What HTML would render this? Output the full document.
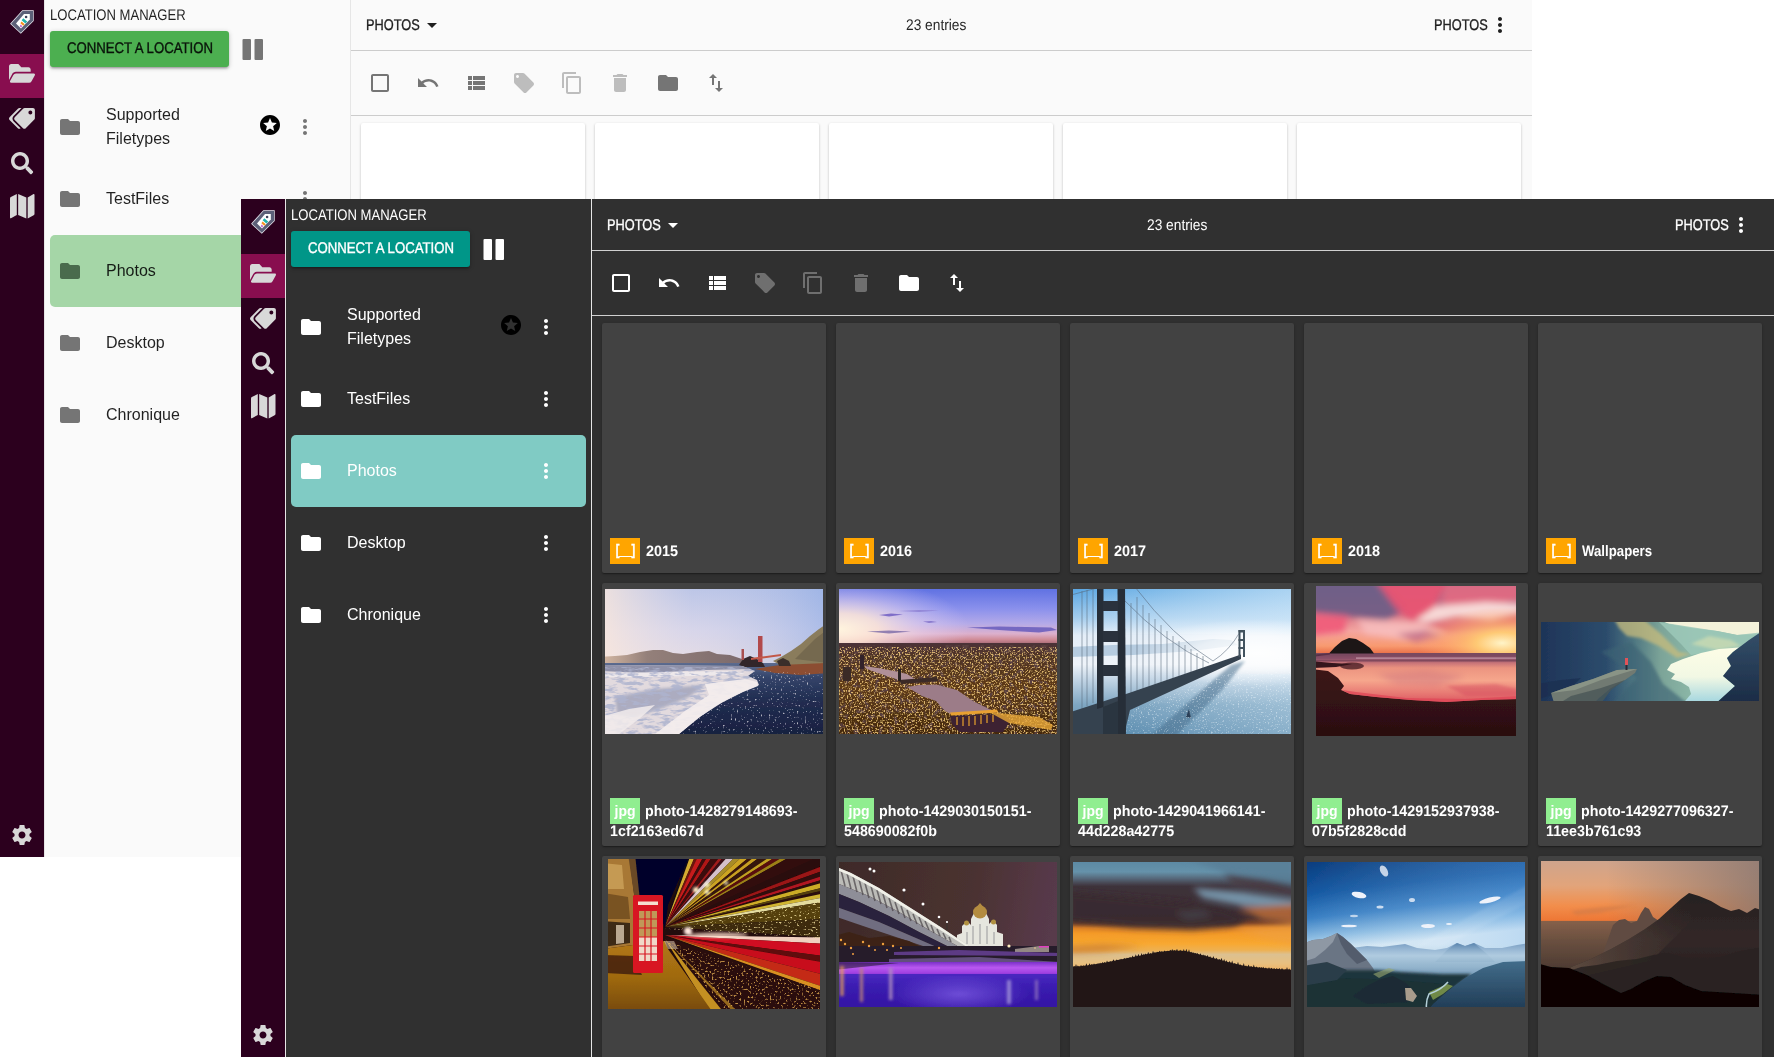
<!DOCTYPE html>
<html><head><meta charset="utf-8"><title>Location Manager</title>
<style>
html,body{margin:0;padding:0}
body{width:1774px;height:1057px;overflow:hidden;position:relative;background:#fff;font-family:"Liberation Sans",sans-serif}
.wrap{position:absolute;overflow:hidden}
.app{position:absolute;left:0;width:1533px;height:858px;overflow:hidden}
.lname,.jb,.fb{will-change:transform}
.fn,.pn{text-rendering:geometricPrecision;transform:scaleY(1.08);transform-origin:0 0}
.fn{transform:scale(1.03,1.08)}
.pn{transform:scale(1.02,1.08)}
.fn.w{transform:scale(.945,1.08)}
.ic{position:absolute;display:block;overflow:visible}
.side{position:absolute;left:0;top:0;width:44px;height:858px;background:#2c001e}
.act{position:absolute;left:0;top:55px;width:44px;height:44px;background:#880e4f}
.vl{position:absolute;top:0;width:1px;height:858px}
.panel{position:absolute;left:0;top:0;width:350px;height:858px}
.ptitle{position:absolute;left:50px;top:6px;font-size:14px;line-height:20px;white-space:nowrap}
.ptitle span,.btn span,.hl span,.hr span,.hc span{text-rendering:geometricPrecision}
.ptitle span{display:inline-block;transform:scale(.9346,1.1);transform-origin:0 78%}
.btn{position:absolute;left:50px;top:32px;width:179px;height:36px;border-radius:3px;box-shadow:0 1px 5px rgba(0,0,0,.2),0 2px 2px rgba(0,0,0,.14),0 3px 1px -2px rgba(0,0,0,.12);font-size:14px;line-height:35.4px;white-space:nowrap}
.btn span{position:absolute;left:50%;top:0;display:block;width:180px;margin-left:-90px;text-align:center;-webkit-text-stroke:.35px currentColor;transform:scale(.9413,1.1);transform-origin:50% 63.500%}
.sel{position:absolute;left:50px;width:295px;height:72px;border-radius:5px}
.lname{position:absolute;left:106px;font-size:16px;line-height:24px;white-space:nowrap}
.main{position:absolute;left:351px;top:0;width:1182px;height:858px}
.hdr{position:absolute;left:0;top:0;width:1182px;height:51px;border-bottom:1px solid}
.hl,.hr,.hc{position:absolute;top:15.7px;font-size:14px;line-height:20px;white-space:nowrap}
.hl,.hr{-webkit-text-stroke:.3px currentColor}
.hl span,.hr span{display:inline-block;transform:scale(.9134,1.1);transform-origin:0 78%}
.hc span{display:inline-block;transform:scale(.9821,1.1);transform-origin:0 78%}
.hl{left:15px}
.hr{left:1083px}
.hc{left:554.8px}
.tb{position:absolute;left:0;top:52px;width:1182px;height:64px;border-bottom:1px solid}
.card{position:absolute;width:224px;border-radius:2px;overflow:hidden}
.fb,.jb{position:absolute;left:8px;width:30px;height:26px;text-align:center;color:#fff;font-weight:bold;font-size:14px;line-height:26px}
.fb{background:#ffa500}
.fb span{display:inline-block;transform:translateY(-1.2px) scale(.78,1.08);-webkit-text-stroke:.4px #fff}
.jb{background:#90ee90;top:215px}
.fn{position:absolute;left:43.6px;font-weight:bold;font-size:14px;line-height:24px;white-space:nowrap}
.pn{position:absolute;left:8px;font-weight:bold;font-size:14px;line-height:18px;white-space:nowrap}
.ph{position:absolute;display:block}

.light{background:#fafafa;color:rgba(0,0,0,.87)}
.light .vl,.light .hdr,.light .tb{border-color:#cccccc}
.light .vl{background:#e6e6e6}
.light .btn{background:#4caf50;color:rgba(0,0,0,.87)}
.light .sel{background:#a5d6a7}
.light .card{background:#ffffff;box-shadow:0 1px 3px rgba(0,0,0,.2),0 1px 1px rgba(0,0,0,.14),0 2px 1px -1px rgba(0,0,0,.12)}

.dark{background:#303030;color:#ffffff}
.dark .vl,.dark .hdr,.dark .tb{border-color:#d0d0d0}
.dark .vl{background:#e6e6e6}
.dark .btn{background:#009688;color:#ffffff}
.dark .sel{background:#80cbc4}
.dark .card{background:#424242;box-shadow:0 1px 3px rgba(0,0,0,.2),0 1px 1px rgba(0,0,0,.14),0 2px 1px -1px rgba(0,0,0,.12)}
</style></head>
<body>
<div class="wrap" style="left:0;top:0;width:1532px;height:857px"><div style="position:absolute;left:0;top:-1px">
<div class="app light">
<div class="side">
<div class="act"></div>
<svg class="ic" style="left:10px;top:10.5px;width:24px;height:24px" viewBox="0 0 24 24">
<polygon points="12.3,0.2 23.7,0.2 23.7,11 10.8,23.8 0.1,13.8" fill="#e8e8f0"/>
<polygon points="12.6,0.9 23,0.9 23,10.7 10.8,22.8 1.1,13.8" fill="#5c6078"/>
<polygon points="14,4 19.8,4 19.8,9.6 11,18.4 6,13.6" fill="#ffffff"/>
<circle cx="16.1" cy="7" r="1.3" fill="#3c4058"/>
<polygon points="13.3,8.3 17.2,11.6 15.4,13.4 11.6,10.2" fill="#1fb5ad"/>
<polygon points="11.5,11.4 14.8,14.2 13.2,15.8 10.4,13.2" fill="#f7901e"/>
<polygon points="10.6,14.6 12.2,16 11.2,17.4 9.8,16.2" fill="#c25fd0"/>
</svg>
<svg class="ic" style="left:8.9px;top:65.4px;width:26.00px;height:18.80px" viewBox="0 64 576 384" preserveAspectRatio="none"><path fill="#d8d8d8" d="M572.694 292.093L500.27 416.248A63.997 63.997 0 0 1 444.989 448H45.025c-18.523 0-30.064-20.093-20.731-36.093l72.424-124.155A64 64 0 0 1 152 256h399.964c18.523 0 30.064 20.093 20.730 36.093zM152 224h328v-48c0-26.510-21.490-48-48-48H272l-64-64H48C21.490 64 0 85.490 0 112v278.046l69.077-118.418C86.214 242.250 117.989 224 152 224z"/></svg>
<svg class="ic" style="left:9.4px;top:108.6px;width:25.90px;height:20.80px" viewBox="0 0 640 512" preserveAspectRatio="none"><path fill="#d8d8d8" transform="translate(640,0) scale(-1,1)" d="M497.941 225.941L286.059 14.059A48 48 0 0 0 252.118 0H48C21.490 0 0 21.490 0 48v204.118a48 48 0 0 0 14.059 33.941l211.882 211.882c18.744 18.745 49.136 18.746 67.882 0l204.118-204.118c18.745-18.745 18.745-49.137 0-67.882zM112 160c-26.510 0-48-21.490-48-48s21.490-48 48-48 48 21.490 48 48-21.490 48-48 48zm513.941 133.823L421.823 497.941c-18.745 18.745-49.137 18.745-67.882 0l-.360-.360L527.640 323.522c16.999-16.999 26.360-39.600 26.360-63.640s-9.362-46.641-26.360-63.640L331.397 0h48.721a48 48 0 0 1 33.941 14.059l211.882 211.882c18.745 18.745 18.745 49.137 0 67.882z"/></svg>
<svg class="ic" style="left:11px;top:153.2px;width:22.20px;height:22.20px" viewBox="0 0 512 512" preserveAspectRatio="none"><path fill="#d8d8d8" d="M505 442.700L405.300 343c-4.500-4.500-10.600-7-17-7H372c27.600-35.300 44-79.700 44-128C416 93.100 322.900 0 208 0S0 93.100 0 208s93.100 208 208 208c48.300 0 92.700-16.400 128-44v16.300c0 6.400 2.500 12.500 7 17l99.700 99.700c9.400 9.400 24.600 9.400 33.900 0l28.300-28.300c9.400-9.400 9.400-24.600.1-34zM208 336c-70.700 0-128-57.200-128-128 0-70.700 57.200-128 128-128 70.700 0 128 57.200 128 128 0 70.700-57.200 128-128 128z"/></svg>
<svg class="ic" style="left:9.9px;top:195.2px;width:24.50px;height:24.40px" viewBox="0 32 576 448" preserveAspectRatio="none"><path fill="#d8d8d8" d="M0 117.660V463.980c0 11.320 11.430 19.060 21.940 14.860L160 416V32L20.120 87.950A32.006 32.006 0 0 0 0 117.660zM192 416l192 64V96L192 32v384zM554.060 33.160L416 96v384l139.880-55.950A31.996 31.996 0 0 0 576 394.340V48.020c0-11.320-11.430-19.060-21.940-14.860z"/></svg>
<svg class="ic" style="left:10px;top:824px;width:24px;height:24px" viewBox="0 0 24 24"><path fill="#d8d8d8"  d="M19.43 12.980c.040-.320.070-.640.070-.980s-.030-.660-.070-.980l2.110-1.650c.190-.150.240-.420.120-.640l-2-3.460c-.120-.220-.390-.300-.610-.220l-2.490 1c-.520-.400-1.080-.730-1.690-.980l-.380-2.650C14.460 2.180 14.250 2 14 2h-4c-.250 0-.460.180-.490.420l-.380 2.650c-.610.250-1.170.590-1.690.980l-2.490-1c-.230-.090-.490 0-.610.220l-2 3.460c-.130.220-.070.490.120.640l2.110 1.650c-.040.320-.070.650-.070.980s.030.660.070.980l-2.110 1.650c-.190.150-.240.420-.120.640l2 3.460c.120.220.390.300.610.220l2.490-1c.520.400 1.080.730 1.690.980l.380 2.650c.030.240.240.420.490.420h4c.250 0 .460-.180.490-.420l.380-2.650c.610-.250 1.170-.590 1.690-.980l2.490 1c.230.090.490 0 .610-.220l2-3.460c.120-.220.070-.490-.120-.640l-2.110-1.650zM12 15.500c-1.930 0-3.500-1.570-3.500-3.500s1.570-3.500 3.500-3.500 3.500 1.570 3.500 3.500-1.570 3.500-3.500 3.500z"/></svg>
</div>
<div class="vl" style="left:44px"></div>
<div class="panel">
<div class="ptitle"><span>LOCATION MANAGER</span></div>
<div class="btn"><span>CONNECT A LOCATION</span></div>
<svg class="ic" style="left:242px;top:40px;width:21px;height:21px" viewBox="0 0 21 21"><rect x=".5" y="0" width="8.5" height="21" rx="1.1" fill="#757575"/><rect x="12.500" y="0" width="8.500" height="21" rx="1.100" fill="#757575"/></svg>
<svg class="ic" style="left:58px;top:116px;width:24px;height:24px" viewBox="0 0 24 24"><path fill="#757575"  d="M10 4H4c-1.1 0-1.99.9-1.99 2L2 18c0 1.1.9 2 2 2h16c1.1 0 2-.9 2-2V8c0-1.1-.9-2-2-2h-8l-2-2z"/></svg>
<div class="lname" style="top:104px">Supported<br>Filetypes</div>
<svg class="ic" style="left:258px;top:114px;width:24px;height:24px" viewBox="0 0 24 24"><circle cx="12" cy="12" r="9" fill="#fafafa"/><path fill="#000" d="M11.99 2C6.47 2 2 6.48 2 12s4.470 10 9.990 10C17.520 22 22 17.520 22 12S17.520 2 11.990 2zm4.240 16L12 15.450 7.770 18l1.120-4.810-3.730-3.230 4.920-.420L12 5l1.920 4.530 4.920.420-3.730 3.230L16.230 18z"/></svg>
<svg class="ic" style="left:293px;top:116px;width:24px;height:24px" viewBox="0 0 24 24"><path fill="#757575"  d="M12 8c1.1 0 2-.9 2-2s-.9-2-2-2-2 .9-2 2 .9 2 2 2zm0 2c-1.1 0-2 .9-2 2s.9 2 2 2 2-.9 2-2-.9-2-2-2zm0 6c-1.1 0-2 .9-2 2s.9 2 2 2 2-.9 2-2-.9-2-2-2z"/></svg>
<svg class="ic" style="left:58px;top:188px;width:24px;height:24px" viewBox="0 0 24 24"><path fill="#757575"  d="M10 4H4c-1.1 0-1.99.9-1.99 2L2 18c0 1.1.9 2 2 2h16c1.1 0 2-.9 2-2V8c0-1.1-.9-2-2-2h-8l-2-2z"/></svg>
<div class="lname" style="top:188px">TestFiles</div>
<svg class="ic" style="left:293px;top:188px;width:24px;height:24px" viewBox="0 0 24 24"><path fill="#757575"  d="M12 8c1.1 0 2-.9 2-2s-.9-2-2-2-2 .9-2 2 .9 2 2 2zm0 2c-1.1 0-2 .9-2 2s.9 2 2 2 2-.9 2-2-.9-2-2-2zm0 6c-1.1 0-2 .9-2 2s.9 2 2 2 2-.9 2-2-.9-2-2-2z"/></svg>
<div class="sel" style="top:236px"></div>
<svg class="ic" style="left:58px;top:260px;width:24px;height:24px" viewBox="0 0 24 24"><path fill="#4a6b4d"  d="M10 4H4c-1.1 0-1.99.9-1.99 2L2 18c0 1.1.9 2 2 2h16c1.1 0 2-.9 2-2V8c0-1.1-.9-2-2-2h-8l-2-2z"/></svg>
<div class="lname" style="top:260px">Photos</div>
<svg class="ic" style="left:58px;top:332px;width:24px;height:24px" viewBox="0 0 24 24"><path fill="#757575"  d="M10 4H4c-1.1 0-1.99.9-1.99 2L2 18c0 1.1.9 2 2 2h16c1.1 0 2-.9 2-2V8c0-1.1-.9-2-2-2h-8l-2-2z"/></svg>
<div class="lname" style="top:332px">Desktop</div>
<svg class="ic" style="left:293px;top:332px;width:24px;height:24px" viewBox="0 0 24 24"><path fill="#757575"  d="M12 8c1.1 0 2-.9 2-2s-.9-2-2-2-2 .9-2 2 .9 2 2 2zm0 2c-1.1 0-2 .9-2 2s.9 2 2 2 2-.9 2-2-.9-2-2-2zm0 6c-1.1 0-2 .9-2 2s.9 2 2 2 2-.9 2-2-.9-2-2-2z"/></svg>
<svg class="ic" style="left:58px;top:404px;width:24px;height:24px" viewBox="0 0 24 24"><path fill="#757575"  d="M10 4H4c-1.1 0-1.99.9-1.99 2L2 18c0 1.1.9 2 2 2h16c1.1 0 2-.9 2-2V8c0-1.1-.9-2-2-2h-8l-2-2z"/></svg>
<div class="lname" style="top:404px">Chronique</div>
<svg class="ic" style="left:293px;top:404px;width:24px;height:24px" viewBox="0 0 24 24"><path fill="#757575"  d="M12 8c1.1 0 2-.9 2-2s-.9-2-2-2-2 .9-2 2 .9 2 2 2zm0 2c-1.1 0-2 .9-2 2s.9 2 2 2 2-.9 2-2-.9-2-2-2zm0 6c-1.1 0-2 .9-2 2s.9 2 2 2 2-.9 2-2-.9-2-2-2z"/></svg>
</div>
<div class="vl" style="left:350px"></div>
<div class="main">
<div class="hdr">
<div class="hl"><span>PHOTOS</span></div>
<svg class="ic" style="left:69px;top:14px;width:24px;height:24px" viewBox="0 0 24 24"><path fill="#1f1f1f"  d="M7 10l5 5 5-5z"/></svg>
<div class="hc"><span>23 entries</span></div>
<div class="hr"><span>PHOTOS</span></div>
<svg class="ic" style="left:1137px;top:14px;width:24px;height:24px" viewBox="0 0 24 24"><path fill="#1f1f1f"  d="M12 8c1.1 0 2-.9 2-2s-.9-2-2-2-2 .9-2 2 .9 2 2 2zm0 2c-1.1 0-2 .9-2 2s.9 2 2 2 2-.9 2-2-.9-2-2-2zm0 6c-1.1 0-2 .9-2 2s.9 2 2 2 2-.9 2-2-.9-2-2-2z"/></svg>
</div>
<div class="tb">
<svg class="ic" style="left:17px;top:20px;width:24px;height:24px" viewBox="0 0 24 24"><path fill="#757575"  d="M19 5v14H5V5h14m0-2H5c-1.1 0-2 .9-2 2v14c0 1.1.9 2 2 2h14c1.1 0 2-.9 2-2V5c0-1.1-.9-2-2-2z"/></svg>
<svg class="ic" style="left:65px;top:20px;width:24px;height:24px" viewBox="0 0 24 24"><path fill="#757575"  d="M12.5 8c-2.650 0-5.050.990-6.900 2.600L2 7v9h9l-3.620-3.620c1.390-1.160 3.160-1.880 5.120-1.880 3.540 0 6.550 2.310 7.600 5.500l2.370-.780C21.080 11.030 17.150 8 12.500 8z"/></svg>
<svg class="ic" style="left:113px;top:20px;width:24px;height:24px" viewBox="0 0 24 24"><path fill="#757575"  d="M4 14h4v-4H4v4zm0 5h4v-4H4v4zM4 9h4V5H4v4zm5 5h12v-4H9v4zm0 5h12v-4H9v4zM9 5v4h12V5H9z"/></svg>
<svg class="ic" style="left:161px;top:20px;width:24px;height:24px" viewBox="0 0 24 24"><path fill="#bdbdbd"  d="M21.41 11.58l-9-9C12.050 2.220 11.550 2 11 2H4c-1.100 0-2 .900-2 2v7c0 .550.220 1.050.590 1.420l9 9c.360.360.860.580 1.410.580.550 0 1.050-.220 1.410-.590l7-7c.370-.360.590-.860.590-1.410 0-.550-.230-1.060-.590-1.420zM5.500 7C4.670 7 4 6.330 4 5.500S4.670 4 5.500 4 7 4.670 7 5.500 6.330 7 5.500 7z"/></svg>
<svg class="ic" style="left:209px;top:20px;width:24px;height:24px" viewBox="0 0 24 24"><path fill="#bdbdbd"  d="M16 1H4c-1.100 0-2 .900-2 2v14h2V3h12V1zm3 4H8c-1.100 0-2 .900-2 2v14c0 1.100.900 2 2 2h11c1.100 0 2-.900 2-2V7c0-1.100-.900-2-2-2zm0 16H8V7h11v14z"/></svg>
<svg class="ic" style="left:257px;top:20px;width:24px;height:24px" viewBox="0 0 24 24"><path fill="#bdbdbd"  d="M6 19c0 1.100.900 2 2 2h8c1.100 0 2-.900 2-2V7H6v12zM19 4h-3.500l-1-1h-5l-1 1H5v2h14V4z"/></svg>
<svg class="ic" style="left:305px;top:20px;width:24px;height:24px" viewBox="0 0 24 24"><path fill="#757575"  d="M10 4H4c-1.1 0-1.99.9-1.99 2L2 18c0 1.1.9 2 2 2h16c1.1 0 2-.9 2-2V8c0-1.1-.9-2-2-2h-8l-2-2z"/></svg>
<svg class="ic" style="left:353px;top:20px;width:24px;height:24px" viewBox="0 0 24 24"><path fill="#757575"  d="M16 17.010V10h-2v7.010h-3L15 21l4-3.990h-3zM9 3L5 6.990h3V14h2V6.990h3L9 3z"/></svg>
</div>
<div class="card" style="left:10px;top:124px;height:250px">
</div>
<div class="card" style="left:244px;top:124px;height:250px">
</div>
<div class="card" style="left:478px;top:124px;height:250px">
</div>
<div class="card" style="left:712px;top:124px;height:250px">
</div>
<div class="card" style="left:946px;top:124px;height:250px">
</div>
</div>
</div>
</div></div>
<div class="wrap" style="left:241px;top:199px;width:1533px;height:858px">
<div class="app dark">
<div class="side">
<div class="act"></div>
<svg class="ic" style="left:10px;top:10.5px;width:24px;height:24px" viewBox="0 0 24 24">
<polygon points="12.3,0.2 23.7,0.2 23.7,11 10.8,23.8 0.1,13.8" fill="#e8e8f0"/>
<polygon points="12.6,0.9 23,0.9 23,10.7 10.8,22.8 1.1,13.8" fill="#5c6078"/>
<polygon points="14,4 19.8,4 19.8,9.6 11,18.4 6,13.6" fill="#ffffff"/>
<circle cx="16.1" cy="7" r="1.3" fill="#3c4058"/>
<polygon points="13.3,8.3 17.2,11.6 15.4,13.4 11.6,10.2" fill="#1fb5ad"/>
<polygon points="11.5,11.4 14.8,14.2 13.2,15.8 10.4,13.2" fill="#f7901e"/>
<polygon points="10.6,14.6 12.2,16 11.2,17.4 9.8,16.2" fill="#c25fd0"/>
</svg>
<svg class="ic" style="left:8.9px;top:65.4px;width:26.00px;height:18.80px" viewBox="0 64 576 384" preserveAspectRatio="none"><path fill="#d8d8d8" d="M572.694 292.093L500.27 416.248A63.997 63.997 0 0 1 444.989 448H45.025c-18.523 0-30.064-20.093-20.731-36.093l72.424-124.155A64 64 0 0 1 152 256h399.964c18.523 0 30.064 20.093 20.730 36.093zM152 224h328v-48c0-26.510-21.490-48-48-48H272l-64-64H48C21.490 64 0 85.490 0 112v278.046l69.077-118.418C86.214 242.250 117.989 224 152 224z"/></svg>
<svg class="ic" style="left:9.4px;top:108.6px;width:25.90px;height:20.80px" viewBox="0 0 640 512" preserveAspectRatio="none"><path fill="#d8d8d8" transform="translate(640,0) scale(-1,1)" d="M497.941 225.941L286.059 14.059A48 48 0 0 0 252.118 0H48C21.490 0 0 21.490 0 48v204.118a48 48 0 0 0 14.059 33.941l211.882 211.882c18.744 18.745 49.136 18.746 67.882 0l204.118-204.118c18.745-18.745 18.745-49.137 0-67.882zM112 160c-26.510 0-48-21.490-48-48s21.490-48 48-48 48 21.490 48 48-21.490 48-48 48zm513.941 133.823L421.823 497.941c-18.745 18.745-49.137 18.745-67.882 0l-.360-.360L527.640 323.522c16.999-16.999 26.360-39.600 26.360-63.640s-9.362-46.641-26.360-63.640L331.397 0h48.721a48 48 0 0 1 33.941 14.059l211.882 211.882c18.745 18.745 18.745 49.137 0 67.882z"/></svg>
<svg class="ic" style="left:11px;top:153.2px;width:22.20px;height:22.20px" viewBox="0 0 512 512" preserveAspectRatio="none"><path fill="#d8d8d8" d="M505 442.700L405.300 343c-4.500-4.500-10.600-7-17-7H372c27.600-35.300 44-79.700 44-128C416 93.100 322.900 0 208 0S0 93.100 0 208s93.100 208 208 208c48.300 0 92.700-16.400 128-44v16.300c0 6.400 2.500 12.500 7 17l99.700 99.700c9.400 9.400 24.600 9.400 33.900 0l28.300-28.300c9.400-9.400 9.400-24.600.1-34zM208 336c-70.700 0-128-57.200-128-128 0-70.700 57.200-128 128-128 70.700 0 128 57.200 128 128 0 70.700-57.200 128-128 128z"/></svg>
<svg class="ic" style="left:9.9px;top:195.2px;width:24.50px;height:24.40px" viewBox="0 32 576 448" preserveAspectRatio="none"><path fill="#d8d8d8" d="M0 117.660V463.980c0 11.320 11.430 19.060 21.940 14.860L160 416V32L20.120 87.950A32.006 32.006 0 0 0 0 117.660zM192 416l192 64V96L192 32v384zM554.060 33.160L416 96v384l139.880-55.950A31.996 31.996 0 0 0 576 394.340V48.020c0-11.320-11.430-19.060-21.940-14.860z"/></svg>
<svg class="ic" style="left:10px;top:824px;width:24px;height:24px" viewBox="0 0 24 24"><path fill="#d8d8d8"  d="M19.43 12.980c.040-.320.070-.640.070-.980s-.030-.660-.070-.980l2.110-1.650c.190-.150.240-.420.120-.640l-2-3.460c-.120-.220-.390-.300-.610-.220l-2.490 1c-.520-.400-1.080-.730-1.690-.980l-.380-2.650C14.460 2.180 14.250 2 14 2h-4c-.250 0-.460.180-.490.420l-.380 2.650c-.610.250-1.170.590-1.690.980l-2.490-1c-.230-.090-.490 0-.610.220l-2 3.460c-.130.220-.070.490.120.640l2.110 1.650c-.040.320-.070.650-.070.980s.030.660.070.980l-2.110 1.650c-.190.150-.240.420-.120.640l2 3.460c.120.220.390.300.610.220l2.490-1c.520.400 1.080.730 1.690.980l.380 2.650c.030.240.240.420.490.420h4c.250 0 .460-.180.490-.420l.380-2.650c.610-.250 1.170-.590 1.690-.980l2.490 1c.230.090.490 0 .610-.220l2-3.460c.120-.220.070-.490-.120-.640l-2.110-1.650zM12 15.500c-1.930 0-3.500-1.570-3.500-3.500s1.570-3.500 3.500-3.500 3.500 1.570 3.500 3.500-1.570 3.500-3.500 3.500z"/></svg>
</div>
<div class="vl" style="left:44px"></div>
<div class="panel">
<div class="ptitle"><span>LOCATION MANAGER</span></div>
<div class="btn"><span>CONNECT A LOCATION</span></div>
<svg class="ic" style="left:242px;top:40px;width:21px;height:21px" viewBox="0 0 21 21"><rect x=".5" y="0" width="8.5" height="21" rx="1.1" fill="#ffffff"/><rect x="12.500" y="0" width="8.500" height="21" rx="1.100" fill="#ffffff"/></svg>
<svg class="ic" style="left:58px;top:116px;width:24px;height:24px" viewBox="0 0 24 24"><path fill="#ffffff"  d="M10 4H4c-1.1 0-1.99.9-1.99 2L2 18c0 1.1.9 2 2 2h16c1.1 0 2-.9 2-2V8c0-1.1-.9-2-2-2h-8l-2-2z"/></svg>
<div class="lname" style="top:104px">Supported<br>Filetypes</div>
<svg class="ic" style="left:258px;top:114px;width:24px;height:24px" viewBox="0 0 24 24"><circle cx="12" cy="12" r="9" fill="#303030"/><path fill="#000" d="M11.99 2C6.47 2 2 6.48 2 12s4.470 10 9.990 10C17.520 22 22 17.520 22 12S17.520 2 11.990 2zm4.240 16L12 15.450 7.770 18l1.120-4.810-3.730-3.230 4.920-.420L12 5l1.920 4.530 4.920.420-3.730 3.230L16.230 18z"/></svg>
<svg class="ic" style="left:293px;top:116px;width:24px;height:24px" viewBox="0 0 24 24"><path fill="#ffffff"  d="M12 8c1.1 0 2-.9 2-2s-.9-2-2-2-2 .9-2 2 .9 2 2 2zm0 2c-1.1 0-2 .9-2 2s.9 2 2 2 2-.9 2-2-.9-2-2-2zm0 6c-1.1 0-2 .9-2 2s.9 2 2 2 2-.9 2-2-.9-2-2-2z"/></svg>
<svg class="ic" style="left:58px;top:188px;width:24px;height:24px" viewBox="0 0 24 24"><path fill="#ffffff"  d="M10 4H4c-1.1 0-1.99.9-1.99 2L2 18c0 1.1.9 2 2 2h16c1.1 0 2-.9 2-2V8c0-1.1-.9-2-2-2h-8l-2-2z"/></svg>
<div class="lname" style="top:188px">TestFiles</div>
<svg class="ic" style="left:293px;top:188px;width:24px;height:24px" viewBox="0 0 24 24"><path fill="#ffffff"  d="M12 8c1.1 0 2-.9 2-2s-.9-2-2-2-2 .9-2 2 .9 2 2 2zm0 2c-1.1 0-2 .9-2 2s.9 2 2 2 2-.9 2-2-.9-2-2-2zm0 6c-1.1 0-2 .9-2 2s.9 2 2 2 2-.9 2-2-.9-2-2-2z"/></svg>
<div class="sel" style="top:236px"></div>
<svg class="ic" style="left:58px;top:260px;width:24px;height:24px" viewBox="0 0 24 24"><path fill="#ffffff"  d="M10 4H4c-1.1 0-1.99.9-1.99 2L2 18c0 1.1.9 2 2 2h16c1.1 0 2-.9 2-2V8c0-1.1-.9-2-2-2h-8l-2-2z"/></svg>
<div class="lname" style="top:260px">Photos</div>
<svg class="ic" style="left:293px;top:260px;width:24px;height:24px" viewBox="0 0 24 24"><path fill="#ffffff"  d="M12 8c1.1 0 2-.9 2-2s-.9-2-2-2-2 .9-2 2 .9 2 2 2zm0 2c-1.1 0-2 .9-2 2s.9 2 2 2 2-.9 2-2-.9-2-2-2zm0 6c-1.1 0-2 .9-2 2s.9 2 2 2 2-.9 2-2-.9-2-2-2z"/></svg>
<svg class="ic" style="left:58px;top:332px;width:24px;height:24px" viewBox="0 0 24 24"><path fill="#ffffff"  d="M10 4H4c-1.1 0-1.99.9-1.99 2L2 18c0 1.1.9 2 2 2h16c1.1 0 2-.9 2-2V8c0-1.1-.9-2-2-2h-8l-2-2z"/></svg>
<div class="lname" style="top:332px">Desktop</div>
<svg class="ic" style="left:293px;top:332px;width:24px;height:24px" viewBox="0 0 24 24"><path fill="#ffffff"  d="M12 8c1.1 0 2-.9 2-2s-.9-2-2-2-2 .9-2 2 .9 2 2 2zm0 2c-1.1 0-2 .9-2 2s.9 2 2 2 2-.9 2-2-.9-2-2-2zm0 6c-1.1 0-2 .9-2 2s.9 2 2 2 2-.9 2-2-.9-2-2-2z"/></svg>
<svg class="ic" style="left:58px;top:404px;width:24px;height:24px" viewBox="0 0 24 24"><path fill="#ffffff"  d="M10 4H4c-1.1 0-1.99.9-1.99 2L2 18c0 1.1.9 2 2 2h16c1.1 0 2-.9 2-2V8c0-1.1-.9-2-2-2h-8l-2-2z"/></svg>
<div class="lname" style="top:404px">Chronique</div>
<svg class="ic" style="left:293px;top:404px;width:24px;height:24px" viewBox="0 0 24 24"><path fill="#ffffff"  d="M12 8c1.1 0 2-.9 2-2s-.9-2-2-2-2 .9-2 2 .9 2 2 2zm0 2c-1.1 0-2 .9-2 2s.9 2 2 2 2-.9 2-2-.9-2-2-2zm0 6c-1.1 0-2 .9-2 2s.9 2 2 2 2-.9 2-2-.9-2-2-2z"/></svg>
</div>
<div class="vl" style="left:350px"></div>
<div class="main">
<div class="hdr">
<div class="hl"><span>PHOTOS</span></div>
<svg class="ic" style="left:69px;top:14px;width:24px;height:24px" viewBox="0 0 24 24"><path fill="#ffffff"  d="M7 10l5 5 5-5z"/></svg>
<div class="hc"><span>23 entries</span></div>
<div class="hr"><span>PHOTOS</span></div>
<svg class="ic" style="left:1137px;top:14px;width:24px;height:24px" viewBox="0 0 24 24"><path fill="#ffffff"  d="M12 8c1.1 0 2-.9 2-2s-.9-2-2-2-2 .9-2 2 .9 2 2 2zm0 2c-1.1 0-2 .9-2 2s.9 2 2 2 2-.9 2-2-.9-2-2-2zm0 6c-1.1 0-2 .9-2 2s.9 2 2 2 2-.9 2-2-.9-2-2-2z"/></svg>
</div>
<div class="tb">
<svg class="ic" style="left:17px;top:20px;width:24px;height:24px" viewBox="0 0 24 24"><path fill="#ffffff"  d="M19 5v14H5V5h14m0-2H5c-1.1 0-2 .9-2 2v14c0 1.1.9 2 2 2h14c1.1 0 2-.9 2-2V5c0-1.1-.9-2-2-2z"/></svg>
<svg class="ic" style="left:65px;top:20px;width:24px;height:24px" viewBox="0 0 24 24"><path fill="#ffffff"  d="M12.5 8c-2.650 0-5.050.990-6.900 2.600L2 7v9h9l-3.620-3.620c1.390-1.160 3.160-1.880 5.120-1.880 3.540 0 6.550 2.310 7.600 5.500l2.370-.780C21.080 11.030 17.150 8 12.500 8z"/></svg>
<svg class="ic" style="left:113px;top:20px;width:24px;height:24px" viewBox="0 0 24 24"><path fill="#ffffff"  d="M4 14h4v-4H4v4zm0 5h4v-4H4v4zM4 9h4V5H4v4zm5 5h12v-4H9v4zm0 5h12v-4H9v4zM9 5v4h12V5H9z"/></svg>
<svg class="ic" style="left:161px;top:20px;width:24px;height:24px" viewBox="0 0 24 24"><path fill="#6f6f6f"  d="M21.41 11.58l-9-9C12.050 2.220 11.550 2 11 2H4c-1.100 0-2 .900-2 2v7c0 .550.220 1.050.590 1.420l9 9c.360.360.860.580 1.410.580.550 0 1.050-.220 1.410-.590l7-7c.370-.360.590-.860.590-1.410 0-.550-.230-1.060-.590-1.420zM5.500 7C4.670 7 4 6.330 4 5.500S4.670 4 5.500 4 7 4.670 7 5.500 6.330 7 5.500 7z"/></svg>
<svg class="ic" style="left:209px;top:20px;width:24px;height:24px" viewBox="0 0 24 24"><path fill="#6f6f6f"  d="M16 1H4c-1.100 0-2 .900-2 2v14h2V3h12V1zm3 4H8c-1.100 0-2 .900-2 2v14c0 1.100.900 2 2 2h11c1.100 0 2-.900 2-2V7c0-1.100-.900-2-2-2zm0 16H8V7h11v14z"/></svg>
<svg class="ic" style="left:257px;top:20px;width:24px;height:24px" viewBox="0 0 24 24"><path fill="#6f6f6f"  d="M6 19c0 1.100.900 2 2 2h8c1.100 0 2-.900 2-2V7H6v12zM19 4h-3.500l-1-1h-5l-1 1H5v2h14V4z"/></svg>
<svg class="ic" style="left:305px;top:20px;width:24px;height:24px" viewBox="0 0 24 24"><path fill="#ffffff"  d="M10 4H4c-1.1 0-1.99.9-1.99 2L2 18c0 1.1.9 2 2 2h16c1.1 0 2-.9 2-2V8c0-1.1-.9-2-2-2h-8l-2-2z"/></svg>
<svg class="ic" style="left:353px;top:20px;width:24px;height:24px" viewBox="0 0 24 24"><path fill="#ffffff"  d="M16 17.010V10h-2v7.010h-3L15 21l4-3.990h-3zM9 3L5 6.990h3V14h2V6.990h3L9 3z"/></svg>
</div>
<div class="card" style="left:10px;top:124px;height:250px">
<div class="fb" style="top:215px"><span>[__]</span></div><div class="fn" style="top:215px">2015</div>
</div>
<div class="card" style="left:244px;top:124px;height:250px">
<div class="fb" style="top:215px"><span>[__]</span></div><div class="fn" style="top:215px">2016</div>
</div>
<div class="card" style="left:478px;top:124px;height:250px">
<div class="fb" style="top:215px"><span>[__]</span></div><div class="fn" style="top:215px">2017</div>
</div>
<div class="card" style="left:712px;top:124px;height:250px">
<div class="fb" style="top:215px"><span>[__]</span></div><div class="fn" style="top:215px">2018</div>
</div>
<div class="card" style="left:946px;top:124px;height:250px">
<div class="fb" style="top:215px"><span>[__]</span></div><div class="fn w" style="top:215px">Wallpapers</div>
</div>
<div class="card" style="left:10px;top:384px;height:263px">
<svg class="ph" style="left:3px;top:6px;width:218px;height:145px" viewBox="0 0 218 145" preserveAspectRatio="none"><defs><filter id="b1" x="-20%" y="-20%" width="140%" height="140%"><feGaussianBlur stdDeviation="0.7"/></filter><filter id="B1" x="-30%" y="-30%" width="160%" height="160%"><feGaussianBlur stdDeviation="3"/></filter><filter id="M1" x="-30%" y="-30%" width="160%" height="160%"><feGaussianBlur stdDeviation="1.5"/></filter></defs>
<defs><linearGradient id="p1a" gradientUnits="userSpaceOnUse" x1="0" y1="0" x2="0" y2="76"><stop offset="0" stop-color="#aebde6"/><stop offset=".55" stop-color="#d2d2ea"/><stop offset="1" stop-color="#e6dce2"/></linearGradient>
<linearGradient id="p1b" gradientUnits="userSpaceOnUse" x1="0" y1="0" x2="218" y2="0"><stop offset="0" stop-color="#fbe8dc" stop-opacity=".8"/><stop offset=".4" stop-color="#e8e0ea" stop-opacity=".25"/><stop offset="1" stop-color="#96b0e6" stop-opacity=".6"/></linearGradient>
<linearGradient id="p1c" gradientUnits="userSpaceOnUse" x1="0" y1="0" x2="140" y2="0"><stop offset="0" stop-color="#d0b4a0"/><stop offset=".3" stop-color="#94807a"/><stop offset="1" stop-color="#7c6a6c"/></linearGradient>
<linearGradient id="p1d" gradientUnits="userSpaceOnUse" x1="0" y1="74" x2="0" y2="145"><stop offset="0" stop-color="#5c6c90"/><stop offset=".2" stop-color="#34446a"/><stop offset=".5" stop-color="#222e52"/><stop offset="1" stop-color="#182040"/></linearGradient>
<filter id="p1n" x="0" y="0" width="100%" height="100%"><feTurbulence type="fractalNoise" baseFrequency=".5" numOctaves="2" seed="4"/><feColorMatrix values="0 0 0 0 .9  0 0 0 0 .86  0 0 0 0 .9  0 0 0 7 -4.500"/></filter>
<filter id="p1m" x="0" y="0" width="100%" height="100%"><feTurbulence type="fractalNoise" baseFrequency=".09 .3" numOctaves="3" seed="9"/><feColorMatrix values="0 0 0 0 .42  0 0 0 0 .45  0 0 0 0 .62  0 0 0 5 -2.250"/></filter>
<clipPath id="p1s"><polygon points="150,82 143,87 152,91 154,96 135,104 112,116 92,130 68,145 218,145 218,84"/></clipPath>
<clipPath id="p1f"><polygon points="0,78 137,78 150,82 143,87 152,91 154,96 135,104 112,116 92,130 68,145 0,145"/></clipPath></defs>
<g filter="url(#b1)">
<rect x="-5" y="-5" width="228" height="85" fill="url(#p1a)"/>
<rect x="-5" y="-5" width="228" height="85" fill="url(#p1b)"/>
<polygon points="-5,68 10,67 22,66 35,63 48,61 58,61 68,64 78,65 92,63 104,62 112,65 125,66 137,70 137,76 -5,76" fill="url(#p1c)"/>
<rect x="-5" y="74" width="228" height="76" fill="url(#p1d)"/>
<polygon points="223,34 214,40 205,47 196,55 186,62 176,68 168,72 175,76 223,80" fill="#8a7c5c"/>
<polygon points="223,40 210,50 198,62 190,70 223,74" fill="#75694f"/>
<polygon points="150,80 175,76 223,74 223,84 195,86 170,84" fill="#8c4e30"/>
<polygon points="134,76 138,70 145,67 152,70 158,74 160,78 140,78" fill="#33282a"/>
<polygon points="172,72 178,69 184,72 186,77 174,77" fill="#3a2e2c"/>
<rect x="153" y="47" width="4.500" height="26" fill="#b24a4c"/>
<rect x="136.500" y="60" width="2.500" height="11" fill="#a85050"/>
<polygon points="146,69 176,65 176,67 146,71" fill="#c25848"/>
<polygon points="-5,76 137,77 150,82 143,87 152,91 154,96 135,104 112,116 92,130 68,150 -5,150" fill="#e2dade"/>
<polygon points="-5,76 137,77 146,80 100,81 40,84 -5,82" fill="#8e90a8"/>
<polygon points="-5,84 60,83 130,82 140,85 90,87 30,88 -5,88" fill="#f0eaec" opacity=".9"/>
<polygon points="10,108 50,100 100,96 84,108 60,118 30,128 12,126" fill="#8088a8" opacity=".55" filter="url(#M1)"/>
</g>
<rect x="0" y="78" width="160" height="67" filter="url(#p1m)" clip-path="url(#p1f)" opacity=".85"/>
<g filter="url(#b1)">
<polygon points="100,95 140,90 152,93 153,97 138,103 118,113 96,127 74,145 50,145 80,122 104,106" fill="#f4eeee" opacity=".92"/>
<polygon points="-5,128 24,120 50,116 34,130 14,145 -5,145" fill="#f2ecec" opacity=".85"/>
</g>
<rect x="60" y="80" width="158" height="65" filter="url(#p1n)" clip-path="url(#p1s)" opacity=".7"/>
</svg>
<div class="jb"><span>jpg</span></div><div class="pn" style="top:217.6px;left:42.6px">photo-1428279148693-</div><div class="pn" style="top:238.1px">1cf2163ed67d</div>
</div>
<div class="card" style="left:244px;top:384px;height:263px">
<svg class="ph" style="left:3px;top:6px;width:218px;height:145px" viewBox="0 0 218 145" preserveAspectRatio="none"><defs><filter id="b2" x="-20%" y="-20%" width="140%" height="140%"><feGaussianBlur stdDeviation="0.7"/></filter><filter id="B2" x="-30%" y="-30%" width="160%" height="160%"><feGaussianBlur stdDeviation="3"/></filter><filter id="M2" x="-30%" y="-30%" width="160%" height="160%"><feGaussianBlur stdDeviation="1.5"/></filter></defs>
<defs><linearGradient id="p2a" gradientUnits="userSpaceOnUse" x1="0" y1="0" x2="0" y2="56"><stop offset="0" stop-color="#6072e2"/><stop offset=".35" stop-color="#8a90ec"/><stop offset=".62" stop-color="#b4aae8"/><stop offset=".8" stop-color="#dcb0cc"/><stop offset=".9" stop-color="#d08c98"/><stop offset="1" stop-color="#9c606c"/></linearGradient>
<radialGradient id="p2b" cx="0" cy="40" r="130" gradientUnits="userSpaceOnUse" gradientTransform="translate(0 40) scale(1 .4) translate(0 -40)"><stop offset="0" stop-color="#fff4de"/><stop offset=".3" stop-color="#ffe8d8" stop-opacity=".85"/><stop offset=".65" stop-color="#f0dcf0" stop-opacity=".4"/><stop offset="1" stop-color="#e8d8f8" stop-opacity="0"/></radialGradient>
<linearGradient id="p2c" gradientUnits="userSpaceOnUse" x1="0" y1="54" x2="0" y2="145"><stop offset="0" stop-color="#4c3038"/><stop offset=".15" stop-color="#503424"/><stop offset=".5" stop-color="#5e3a16"/><stop offset="1" stop-color="#44280e"/></linearGradient>
<filter id="p2n" x="0" y="0" width="100%" height="100%"><feTurbulence type="fractalNoise" baseFrequency=".6" numOctaves="2" seed="7"/><feColorMatrix values="0 0 0 0 .96  0 0 0 0 .66  0 0 0 0 .22  0 0 0 5 -2.500"/></filter>
<filter id="p2m" x="0" y="0" width="100%" height="100%"><feTurbulence type="fractalNoise" baseFrequency=".2" numOctaves="2" seed="3"/><feColorMatrix values="0 0 0 0 .1  0 0 0 0 .05  0 0 0 0 .05  0 0 0 5 -2.600"/></filter></defs>
<g filter="url(#b2)">
<rect x="-5" y="-5" width="228" height="64" fill="url(#p2a)"/>
<rect x="-5" y="-5" width="228" height="60" fill="url(#p2b)"/>
<polygon points="40,26 52,24.500 64,25.500 50,27.500" fill="#6a58c0" opacity=".8"/>
<polygon points="60,22 80,21 100,21.500 80,23" fill="#8070c8" opacity=".6"/>
<polygon points="128,38.500 160,37.500 212,38.500 218,41 200,43.500 160,41" fill="#5a50b8" opacity=".75"/>
<polygon points="28,42.500 50,41.500 72,42.500 50,44.500" fill="#6a5aa0" opacity=".7"/>
<polygon points="84,32.500 92,32 98,33 90,34" fill="#7060c0" opacity=".7"/>
<rect x="-5" y="54" width="228" height="96" fill="url(#p2c)"/>
</g>
<rect x="0" y="56" width="218" height="89" filter="url(#p2m)"/>
<rect x="0" y="58" width="218" height="87" filter="url(#p2n)" opacity=".8"/>
<g filter="url(#b2)">
<polygon points="25,77 39,79 55,82 68,85 76,90 72,93 60,91 48,87 36,83 28,80" fill="#b09098"/>
<polygon points="68,98 80,96 97,95.500 118,101 134,112 150,120 158,123 112,125 106,122 97,112 83,107" fill="#9c7c88"/>
<polygon points="111,127 160,125 172,131 164,143 120,143 113,135" fill="#3c2430"/>
<polygon points="111,123.500 158,120.500 159,123.500 112,126.500" fill="#e8a030"/>
<polygon points="60,91 98,88 99,92 62,95" fill="#3a2a28"/>
<path d="M118,128v8M124,128v9M130,127v10M136,127v9M142,126v9M148,126v8M154,126v7" stroke="#e8a030" stroke-width="1.500" opacity=".8"/>
<polygon points="150,123 200,128 214,136 212,141 170,134" fill="#e8a838" opacity=".8"/>
<rect x="21" y="66" width="4" height="14" fill="#30242a"/><rect x="59" y="80" width="3" height="12" fill="#2c2024"/><rect x="4" y="78" width="8" height="14" fill="#3a2a26"/>
</g>
</svg>
<div class="jb"><span>jpg</span></div><div class="pn" style="top:217.6px;left:42.6px">photo-1429030150151-</div><div class="pn" style="top:238.1px">548690082f0b</div>
</div>
<div class="card" style="left:478px;top:384px;height:263px">
<svg class="ph" style="left:3px;top:6px;width:218px;height:145px" viewBox="0 0 218 145" preserveAspectRatio="none"><defs><filter id="b3" x="-20%" y="-20%" width="140%" height="140%"><feGaussianBlur stdDeviation="0.7"/></filter><filter id="B3" x="-30%" y="-30%" width="160%" height="160%"><feGaussianBlur stdDeviation="3"/></filter><filter id="M3" x="-30%" y="-30%" width="160%" height="160%"><feGaussianBlur stdDeviation="1.5"/></filter></defs>
<defs><linearGradient id="p3a" gradientUnits="userSpaceOnUse" x1="0" y1="0" x2="0" y2="145"><stop offset="0" stop-color="#5aa6e2"/><stop offset=".2" stop-color="#a4cdee"/><stop offset=".32" stop-color="#e4eef8"/><stop offset=".52" stop-color="#eef3f9"/><stop offset=".62" stop-color="#c4d6e6"/><stop offset=".8" stop-color="#7ea6c2"/><stop offset="1" stop-color="#6090b2"/></linearGradient>
<radialGradient id="p3b" cx="185" cy="64" r="125" gradientUnits="userSpaceOnUse" gradientTransform="translate(185 64) scale(1 .27) translate(-185 -64)"><stop offset="0" stop-color="#fff" stop-opacity=".95"/><stop offset=".5" stop-color="#fff" stop-opacity=".7"/><stop offset="1" stop-color="#fff" stop-opacity="0"/></radialGradient>
<linearGradient id="p3d" gradientUnits="userSpaceOnUse" x1="60" y1="0" x2="218" y2="0"><stop offset="0" stop-color="#e8f4fc" stop-opacity="0"/><stop offset="1" stop-color="#d8ecf8" stop-opacity=".34"/></linearGradient>
<filter id="p3n" x="0" y="0" width="100%" height="100%"><feTurbulence type="fractalNoise" baseFrequency=".6" numOctaves="2" seed="2"/><feColorMatrix values="0 0 0 0 .92  0 0 0 0 .97  0 0 0 0 1  0 0 0 5 -2.900"/></filter>
<clipPath id="p3w"><polygon points="57,122 130,92 175,78 218,76 218,145 53,145"/></clipPath>
<linearGradient id="p3c" gradientUnits="userSpaceOnUse" x1="0" y1="0" x2="218" y2="0"><stop offset="0" stop-color="#fff" stop-opacity="0"/><stop offset="1" stop-color="#dff0fc" stop-opacity=".6"/></linearGradient></defs>
<g filter="url(#b3)">
<rect x="-5" y="-5" width="228" height="155" fill="url(#p3a)"/>
<rect x="-5" y="-5" width="228" height="50" fill="url(#p3c)"/>
<polygon points="-5,58 40,56 90,55 120,52 140,50 158,51 165,56 120,62 60,66 -5,68" fill="#a9c3da" opacity=".8"/>
<rect x="-5" y="20" width="228" height="100" fill="url(#p3b)"/>
<rect x="-5" y="85" width="228" height="65" fill="url(#p3d)"/>
<polygon points="158,76 172,72 150,100 120,130 100,150 74,150 110,118" fill="#48708e" opacity=".55" filter="url(#M3)"/>
<g stroke="#56677a" stroke-width=".7" fill="none" opacity=".8">
<path d="M62,-2 Q100,48 140,72 Q156,62 167,43"/><path d="M50,10 Q92,54 136,74"/>
<path d="M-2,6 L24,-1"/>
<path d="M9,2v118M14,1v116M20,0v114M58,14v92M64,8v96M70,16v87M76,24v77M82,30v69M88,36v61M94,42v53M100,47v46M106,52v39M112,56v33M118,60v27M124,64v21M130,67v16"/>
</g>
<polygon points="-5,124 56,104 168,65.500 168,70 57,121 50,150 -5,150" fill="#36424f"/>
<polygon points="24,-5 30.500,-5 30.500,118 24,120" fill="#272e38"/>
<polygon points="44.500,-5 52,-5 53,150 45,150" fill="#272e38"/>
<rect x="30" y="12" width="15" height="10" fill="#2a323c"/><rect x="30" y="42" width="15" height="11" fill="#2a323c"/><rect x="30" y="76" width="15" height="11" fill="#2a323c"/>
<polygon points="30,118 45,112 45,150 30,150" fill="#2c3640"/>
<rect x="165.500" y="41" width="2" height="27" fill="#43525f"/><rect x="170" y="41" width="2" height="27" fill="#43525f"/><rect x="165.500" y="41" width="6.500" height="2.500" fill="#43525f"/><rect x="165.500" y="50" width="6.500" height="2" fill="#43525f"/><rect x="165.500" y="58" width="6.500" height="2" fill="#43525f"/>
<polygon points="113,128 116,120 118,129" fill="#2c4058"/>
</g>
<rect x="50" y="76" width="168" height="69" filter="url(#p3n)" clip-path="url(#p3w)" opacity=".45"/></svg>
<div class="jb"><span>jpg</span></div><div class="pn" style="top:217.6px;left:42.6px">photo-1429041966141-</div><div class="pn" style="top:238.1px">44d228a42775</div>
</div>
<div class="card" style="left:712px;top:384px;height:263px">
<svg class="ph" style="left:12px;top:3px;width:200px;height:150px" viewBox="0 0 200 150" preserveAspectRatio="none"><defs><filter id="b4" x="-20%" y="-20%" width="140%" height="140%"><feGaussianBlur stdDeviation="0.7"/></filter><filter id="B4" x="-30%" y="-30%" width="160%" height="160%"><feGaussianBlur stdDeviation="3"/></filter><filter id="M4" x="-30%" y="-30%" width="160%" height="160%"><feGaussianBlur stdDeviation="1.5"/></filter></defs>
<defs><linearGradient id="p4a" gradientUnits="userSpaceOnUse" x1="0" y1="0" x2="0" y2="150"><stop offset="0" stop-color="#8c6c92"/><stop offset=".16" stop-color="#cf6880"/><stop offset=".3" stop-color="#f4a6a0"/><stop offset=".4" stop-color="#f89a70"/><stop offset=".45" stop-color="#ea7048"/></linearGradient>
<radialGradient id="p4b" cx="186" cy="57" r="85" gradientUnits="userSpaceOnUse" gradientTransform="translate(186 57) scale(1 .42) translate(-186 -57)"><stop offset="0" stop-color="#fff4c8"/><stop offset=".3" stop-color="#ffcc74" stop-opacity=".95"/><stop offset=".7" stop-color="#ffa868" stop-opacity=".45"/><stop offset="1" stop-color="#ffa070" stop-opacity="0"/></radialGradient>
<linearGradient id="p4c" gradientUnits="userSpaceOnUse" x1="0" y1="67" x2="0" y2="117"><stop offset="0" stop-color="#74445c"/><stop offset=".12" stop-color="#8c5068"/><stop offset=".2" stop-color="#c87478"/><stop offset=".3" stop-color="#ec9480"/><stop offset=".55" stop-color="#f6a68c"/><stop offset="1" stop-color="#dc5660"/></linearGradient>
<linearGradient id="p4d" gradientUnits="userSpaceOnUse" x1="0" y1="84" x2="0" y2="150"><stop offset="0" stop-color="#3c1618"/><stop offset="1" stop-color="#2a0e10"/></linearGradient></defs>
<g filter="url(#b4)">
<rect x="-5" y="-5" width="210" height="80" fill="url(#p4a)"/>
<g filter="url(#B4)">
<polygon points="-5,-5 62,-5 92,22 70,34 30,30 -5,26" fill="#6c5c86" opacity=".9"/>
<polygon points="60,-5 132,-5 118,22 96,36 80,22" fill="#e85472" opacity=".95"/>
<polygon points="130,-5 205,-5 205,14 160,22 125,18" fill="#e86a80" opacity=".85"/>
<polygon points="-5,28 32,30 28,46 -5,50" fill="#f0607c"/>
<polygon points="120,20 170,16 205,18 205,30 160,42 115,38 100,34" fill="#fbe4e0" opacity=".9"/>
<polygon points="110,36 140,30 175,34 205,26 205,40 170,46 130,46" fill="#d85a70" opacity=".8"/>
<polygon points="40,34 100,36 130,48 90,54 50,48" fill="#f7c0c0" opacity=".8"/>
<polygon points="80,48 110,44 128,50 100,56" fill="#b86080" opacity=".7"/>
<polygon points="140,52 180,48 205,52 205,58 150,58" fill="#f08060" opacity=".7"/>
</g>
<rect x="90" y="10" width="115" height="58" fill="url(#p4b)"/>
<rect x="-5" y="67" width="210" height="50" fill="url(#p4c)"/>
<rect x="-5" y="67" width="210" height="3" fill="#7a4860" opacity=".8"/>
<rect x="40" y="71.500" width="165" height="1.200" fill="#e0b8c4" opacity=".7"/>
<polygon points="60,88 110,84 150,90 120,100 80,98" fill="#c06078" opacity=".35" filter="url(#B4)"/>
<polygon points="130,100 180,98 205,104 205,110 150,110" fill="#d04058" opacity=".4" filter="url(#M4)"/>
<rect x="-5" y="74" width="210" height="1.500" fill="#6a3c50" opacity=".6"/>
<polygon points="13,67.500 19,61 26,55 33,52 40,53 47,57 54,62 58,67.500" fill="#1c1216"/>
<polygon points="-5,69 14,67 14,68.500 -5,71" fill="#5a3048"/>
<ellipse cx="36" cy="80" rx="12" ry="3.500" fill="#401820" opacity=".75"/>
<polygon points="-5,75 16,77 36,78 20,81 -5,82" fill="#35141a"/>
<polygon points="-5,83 12,85 22,92 28,100 25,104 34,108 60,111 95,114 130,116 165,114 205,113 205,155 -5,155" fill="url(#p4d)"/>
<polygon points="26,104 40,106 90,112 150,113 205,110 205,113 165,114 130,116 95,114 60,111 34,108" fill="#e04858" opacity=".8"/>
</g></svg>
<div class="jb"><span>jpg</span></div><div class="pn" style="top:217.6px;left:42.6px">photo-1429152937938-</div><div class="pn" style="top:238.1px">07b5f2828cdd</div>
</div>
<div class="card" style="left:946px;top:384px;height:263px">
<svg class="ph" style="left:3px;top:39px;width:218px;height:79px" viewBox="0 0 218 79" preserveAspectRatio="none"><defs><filter id="b5" x="-20%" y="-20%" width="140%" height="140%"><feGaussianBlur stdDeviation="0.7"/></filter><filter id="B5" x="-30%" y="-30%" width="160%" height="160%"><feGaussianBlur stdDeviation="3"/></filter><filter id="M5" x="-30%" y="-30%" width="160%" height="160%"><feGaussianBlur stdDeviation="1.5"/></filter></defs>
<defs><linearGradient id="p5a" gradientUnits="userSpaceOnUse" x1="0" y1="0" x2="218" y2="0"><stop offset="0" stop-color="#1e3458"/><stop offset=".3" stop-color="#2c4c6c"/><stop offset=".42" stop-color="#4c7480"/><stop offset=".55" stop-color="#7ca498"/><stop offset=".7" stop-color="#8cb8a8"/></linearGradient>
<linearGradient id="p5b" gradientUnits="userSpaceOnUse" x1="0" y1="25" x2="0" y2="79"><stop offset="0" stop-color="#fdfde6"/><stop offset=".55" stop-color="#f2f8e4"/><stop offset="1" stop-color="#a8d8e0"/></linearGradient>
<linearGradient id="p5c" gradientUnits="userSpaceOnUse" x1="0" y1="8" x2="0" y2="79"><stop offset="0" stop-color="#34506a"/><stop offset="1" stop-color="#1c2c46"/></linearGradient></defs>
<g filter="url(#b5)">
<rect x="-5" y="-5" width="228" height="89" fill="url(#p5a)"/>
<polygon points="72,-5 100,-5 120,12 138,30 150,32 136,36 118,24 100,16 86,14 78,6" fill="#c8bc7c" opacity=".75" filter="url(#M5)"/>
<polygon points="60,30 90,20 110,40 122,62 150,84 70,84 95,56 80,42" fill="#3e6474" opacity=".65" filter="url(#M5)"/>
<polygon points="112,-5 223,-5 223,12 196,13 176,9 150,6 128,2" fill="#f4f2da"/>
<polygon points="118,0 150,5 176,9 196,13 223,10 223,32 196,28 170,30 150,33 140,22" fill="#9cc8b8" opacity=".85"/>
<polygon points="150,22 168,14 190,18 200,24 176,28" fill="#e0e4b0" opacity=".55" filter="url(#M5)"/>
<polygon points="198,25.500 178,27 160,31 142,37 130,42 126,48 134,52 130,57 140,60 148,65 150,72 140,84 172,84 194,64 182,54 190,44 186,36 192,30" fill="url(#p5b)"/>
<polygon points="223,8 208,18 198,25.500 192,30 186,36 190,44 182,54 194,64 172,84 223,84" fill="url(#p5c)"/>
<polygon points="-5,62 20,58 40,56 30,66 8,74 -5,78" fill="#1a2c4c" opacity=".6"/>
<polygon points="10,71 30,64 52,57 76,48 96,47 94,51 84,58 70,66 58,76 50,84 14,84" fill="#717a72"/>
<polygon points="10,71 30,64 52,57 76,48 96,47 86,50 60,58 34,68" fill="#8a9486"/>
<polygon points="14,84 30,74 60,66 84,58 70,68 58,84" fill="#4a5656" opacity=".8"/>
<rect x="84" y="36" width="3" height="7" fill="#e05258"/><rect x="84.500" y="43" width="2" height="5" fill="#2a2c38"/>
</g></svg>
<div class="jb"><span>jpg</span></div><div class="pn" style="top:217.6px;left:42.6px">photo-1429277096327-</div><div class="pn" style="top:238.1px">11ee3b761c93</div>
</div>
<div class="card" style="left:10px;top:657px;height:263px">
<svg class="ph" style="left:6px;top:3px;width:212px;height:150px" viewBox="0 0 212 150" preserveAspectRatio="none"><defs><filter id="b6" x="-20%" y="-20%" width="140%" height="140%"><feGaussianBlur stdDeviation="0.7"/></filter><filter id="B6" x="-30%" y="-30%" width="160%" height="160%"><feGaussianBlur stdDeviation="3"/></filter><filter id="M6" x="-30%" y="-30%" width="160%" height="160%"><feGaussianBlur stdDeviation="1.5"/></filter></defs>
<defs><linearGradient id="p6a" gradientUnits="userSpaceOnUse" x1="0" y1="85" x2="0" y2="150"><stop offset="0" stop-color="#b07614"/><stop offset=".5" stop-color="#a06a10"/><stop offset="1" stop-color="#7a4c08"/></linearGradient>
<filter id="p6n" x="0" y="0" width="100%" height="100%"><feTurbulence type="fractalNoise" baseFrequency=".5" numOctaves="2" seed="11"/><feColorMatrix values="0 0 0 0 .9  0 0 0 0 .5  0 0 0 0 .1  0 0 0 6 -3.400"/></filter>
<filter id="p6w" x="0" y="0" width="100%" height="100%"><feTurbulence type="fractalNoise" baseFrequency=".35 .6" numOctaves="2" seed="5"/><feColorMatrix values="0 0 0 0 1  0 0 0 0 .85  0 0 0 0 .4  0 0 0 6 -3.600"/></filter>
<clipPath id="p6r"><polygon points="57,82 212,131 212,150 117,150"/></clipPath>
<clipPath id="p6q"><polygon points="57,70 212,42 212,79"/></clipPath></defs>
<g filter="url(#b6)">
<rect x="-5" y="-5" width="222" height="160" fill="#240a0a"/>
<polygon points="57,68 79.6,-5 83,-5" fill="#100818"/>
<polygon points="57,68 83,-5 88,-5" fill="#d4ac30"/>
<polygon points="57,68 88,-5 91,-5" fill="#6a1410"/>
<polygon points="57,68 91,-5 97,-5" fill="#c41a1a"/>
<polygon points="57,68 97,-5 101,-5" fill="#3c0c10"/>
<polygon points="57,68 101,-5 106,-5" fill="#b01818"/>
<polygon points="57,68 106,-5 114,-5" fill="#3a0c10"/>
<polygon points="57,68 114,-5 118,-5" fill="#a01c1c"/>
<polygon points="57,68 118,-5 122,-5" fill="#3a1014"/>
<polygon points="57,68 122,-5 130,-5" fill="#d4c0cc"/>
<polygon points="57,68 130,-5 137,-5" fill="#a88c28"/>
<polygon points="57,68 137,-5 145,-5" fill="#cca424"/>
<polygon points="57,68 145,-5 150,-5" fill="#3a1808"/>
<polygon points="57,68 150,-5 156,-5" fill="#c8a020"/>
<polygon points="57,68 156,-5 166,-5" fill="#34140a"/>
<polygon points="57,68 166,-5 172,-5" fill="#c0a020"/>
<polygon points="57,68 172,-5 180,-5" fill="#5a1010"/>
<polygon points="57,68 180,-5 187,-5" fill="#9c8018"/>
<polygon points="57,68 187,-5 217,-5" fill="#300a0c"/>
<polygon points="57,68 217,-5 217,6" fill="#2c0808"/>
<polygon points="57,68 217,6 217,11" fill="#9a1418"/>
<polygon points="57,68 217,11 217,16" fill="#300a0a"/>
<polygon points="57,68 217,16 217,20" fill="#b01820"/>
<polygon points="57,68 217,20 217,23" fill="#2c0c08"/>
<polygon points="57,68 217,23 217,28" fill="#ccac28"/>
<polygon points="57,68 217,28 217,31" fill="#54400c"/>
<polygon points="57,68 217,31 217,34" fill="#2c1008"/>
<polygon points="57,68 217,34 217,38" fill="#d0b430"/>
<polygon points="57,68 217,38 217,42.6" fill="#e4dca0"/>
<polygon points="57,68 217,42.6 217,60" fill="#54400e"/>
<polygon points="57,68 217,60 217,78.5" fill="#3c2c0a"/>
<polygon points="57,76 217,78.5 217,84.8" fill="#f0d0c0"/>
<polygon points="57,76 217,84.8 217,97.3" fill="#d01020"/>
<polygon points="57,76 217,97.3 217,103.5" fill="#600810"/>
<polygon points="57,76 217,103.5 217,116" fill="#c80c1c"/>
<polygon points="57,76 217,116 217,128.5" fill="#c42c18"/>
<polygon points="57,76 217,128.5 217,133" fill="#d89020"/>
<polygon points="57,78 217,133 217,155 117,155" fill="#2c0c0c"/>
<polygon points="57,80 117,155 104,155" fill="#c49020"/>
<polygon points="57,80 132,155 127,155" fill="#b08020" opacity=".8"/>
<polygon points="19,-5 82,-5 60,46 57,70 50,46 32,42" fill="#04042c"/>
<polygon points="-5,-5 21,-5 27,42 25,86 -5,90" fill="#a87834"/>
<polygon points="-5,4 14,6 16,30 -5,30" fill="#d8b068" opacity=".6"/>
<polygon points="-5,34 20,38 22,60 -5,60" fill="#5a3818" opacity=".6"/>
<polygon points="-5,62 22,64 22,84 -5,88" fill="#2c1c10" opacity=".85"/>
<polygon points="8,66 16,66 16,84 8,85" fill="#d8c8b0" opacity=".8"/>
<polygon points="20,-5 27,-5 32,42 27,42" fill="#6a4a28"/>
<polygon points="-5,90 25,86 57,82 60,90 106,155 -5,155" fill="url(#p6a)"/>
<polygon points="-5,96 26,97 34,116 -5,114" fill="#3c1c06" opacity=".8"/>
<polygon points="56,82 66,82 70,90 60,90" fill="#e8d8c0" opacity=".5"/>
<rect x="25" y="36" width="30" height="78" rx="1.500" fill="#d81420"/>
<rect x="31" y="52" width="18" height="26" fill="#c09858"/>
<rect x="31" y="78" width="18" height="24" fill="#f0d8c8"/>
<rect x="30" y="42.500" width="20" height="3.500" fill="#f4e0d0"/>
<path d="M37,52v50M43,52v50M31,60h18M31,69h18M31,78h18M31,87h18M31,95h18" stroke="#d81420" stroke-width="1.200" fill="none"/>
<g filter="url(#M6)"><circle cx="88" cy="31" r="3" fill="#fffad0"/><circle cx="99" cy="26" r="2.500" fill="#fffad0"/><circle cx="99" cy="33" r="2.500" fill="#fffad0"/><circle cx="118" cy="24" r="2" fill="#fffad0"/><circle cx="80" cy="72" r="4" fill="#ffe8e0"/><ellipse cx="110" cy="76" rx="30" ry="2.500" fill="#ffe0d0" opacity=".8"/></g>
</g>
<rect x="57" y="40" width="160" height="42" filter="url(#p6w)" clip-path="url(#p6q)" opacity=".8"/>
<rect x="57" y="82" width="160" height="68" filter="url(#p6n)" clip-path="url(#p6r)" opacity=".75"/>
</svg>
</div>
<div class="card" style="left:244px;top:657px;height:263px">
<svg class="ph" style="left:3px;top:6px;width:218px;height:145px" viewBox="0 0 218 145" preserveAspectRatio="none"><defs><filter id="b7" x="-20%" y="-20%" width="140%" height="140%"><feGaussianBlur stdDeviation="0.7"/></filter><filter id="B7" x="-30%" y="-30%" width="160%" height="160%"><feGaussianBlur stdDeviation="3"/></filter><filter id="M7" x="-30%" y="-30%" width="160%" height="160%"><feGaussianBlur stdDeviation="1.5"/></filter></defs>
<defs><linearGradient id="p7a" gradientUnits="userSpaceOnUse" x1="0" y1="0" x2="218" y2="40"><stop offset="0" stop-color="#3e2a28"/><stop offset=".6" stop-color="#4a3230"/><stop offset="1" stop-color="#583a4c"/></linearGradient>
<linearGradient id="p7b" gradientUnits="userSpaceOnUse" x1="0" y1="112" x2="0" y2="145"><stop offset="0" stop-color="#4a28c0"/><stop offset=".4" stop-color="#3a1cb0"/><stop offset="1" stop-color="#3414a4"/></linearGradient>
<linearGradient id="p7c" gradientUnits="userSpaceOnUse" x1="0" y1="100" x2="0" y2="114"><stop offset="0" stop-color="#7a30c8"/><stop offset=".4" stop-color="#b858f0"/><stop offset=".8" stop-color="#a040e0"/><stop offset="1" stop-color="#5a28c4"/></linearGradient>
<radialGradient id="p7d" cx="120" cy="132" r="70" gradientUnits="userSpaceOnUse" gradientTransform="translate(120 132) scale(1 .3) translate(-120 -132)"><stop offset="0" stop-color="#7a58e0" stop-opacity=".8"/><stop offset="1" stop-color="#7a58e0" stop-opacity="0"/></radialGradient></defs>
<g filter="url(#b7)">
<rect x="-5" y="-5" width="228" height="100" fill="url(#p7a)"/>
<polygon points="118,86 118,73 123,71 123,64 128,59 132,63 132,57 136,49 141,44 146,49 150,57 150,62 154,58 158,63 158,70 164,72 164,86" fill="#e6e6de"/>
<ellipse cx="141" cy="50" rx="7" ry="6.500" fill="#b48c40"/><polygon points="135,48 141,41 147,48" fill="#b48c40"/>
<circle cx="127.500" cy="61" r="2.500" fill="#b09040"/><circle cx="154.500" cy="60" r="2.500" fill="#b09040"/>
<path d="M128,70v12M134,64v18M141,62v20M148,64v18M155,70v12" stroke="#8a8a90" stroke-width="1.200" opacity=".7"/>
<polygon points="-5,4 12,11 40,26 70,45 100,64 130,84 122,86 90,68 60,50 30,34 -5,20" fill="#bcbcb8"/>
<polygon points="-5,20 30,34 60,50 90,68 122,86 112,86 80,70 50,54 20,40 -5,30" fill="#8e8e98"/>
<polygon points="-5,30 20,40 50,54 80,70 112,86 100,86 70,73 40,60 -5,44" fill="#2a223c"/>
<polygon points="-5,44 40,60 70,73 100,86 90,86 60,76 30,66 -5,54" fill="#76748a" opacity=".9"/>
<path d="M32,7v14M65,28v13M84,42v10M100,55v9M108,60v8" stroke="#3a3030" stroke-width="1"/>
<path d="M2,8l4,16M8,11l4,16M14,14l4,16M20,17l4,16M26,21l4,15M32,24l4,15M38,28l4,14M44,32l4,14M50,36l4,13M56,40l4,12M62,44l4,12M68,48l4,11M74,52l4,10M80,55l4,10M86,59l4,9M92,63l3,8M98,67l3,7M104,71l3,6M110,75l2,5" stroke="#4a4448" stroke-width="1.600" opacity=".7"/>
<polygon points="-5,4 12,11 40,26 70,45 100,64 130,84 128,85 98,66 68,47 38,28 10,13 -5,7" fill="#f0f0e8"/>
<g fill="#fff"><circle cx="31" cy="7" r="1.500"/><circle cx="35" cy="9" r="1.500"/><circle cx="65" cy="28" r="1.600"/><circle cx="84" cy="42" r="1.500"/><circle cx="100" cy="55" r="1.300"/><circle cx="108" cy="60" r="1.100"/></g>
<polygon points="-5,74 10,70 30,76 50,74 70,79 80,84 -5,88" fill="#3c2416"/>
<rect x="-5" y="84" width="228" height="18" fill="#281a2c"/>
<g fill="#f0a040"><circle cx="2" cy="78" r="1.200"/><circle cx="12" cy="86" r="1.200"/><circle cx="30" cy="84" r="1.200"/><circle cx="44" cy="82" r="1.200"/><circle cx="48" cy="88" r="1"/><circle cx="6" cy="82" r="1.200"/><circle cx="24" cy="80" r="1.200"/><circle cx="36" cy="88" r="1"/><circle cx="54" cy="84" r="1.200"/><circle cx="62" cy="86" r="1"/><circle cx="14" cy="92" r="1"/><circle cx="100" cy="86" r="1.200"/><circle cx="170" cy="84" r="1.600" fill="#fff0c0"/><circle cx="196" cy="86" r="1" /></g>
<polygon points="176,87 200,84 210,85 210,90 176,90" fill="#c0b8a8" opacity=".7"/>
<rect x="200" y="84" width="10" height="1.500" fill="#e040c0"/>
<polygon points="55,90 120,88 223,91 223,94 55,93" fill="#8858d0" opacity=".55"/>
<polygon points="50,97 140,95 223,100 223,102 100,100 50,101" fill="#a890e0" opacity=".45"/>
<rect x="-5" y="100" width="228" height="14" fill="url(#p7c)"/>
<polygon points="-5,100 60,101 -5,108" fill="#2a1a38" opacity=".6"/>
<rect x="-5" y="112" width="228" height="38" fill="url(#p7b)"/>
<rect x="-5" y="114" width="228" height="36" fill="url(#p7d)"/>
<g filter="url(#M7)" opacity=".85"><rect x="1.500" y="104" width="3" height="30" fill="#f0a850"/><rect x="21" y="106" width="3" height="34" fill="#c08878"/><rect x="50" y="106" width="3.500" height="32" fill="#b090c0"/><rect x="168" y="118" width="4" height="24" fill="#a090d8"/><rect x="196" y="118" width="3" height="20" fill="#9070c0"/></g>
</g></svg>
</div>
<div class="card" style="left:478px;top:657px;height:263px">
<svg class="ph" style="left:3px;top:6px;width:218px;height:145px" viewBox="0 0 218 145" preserveAspectRatio="none"><defs><filter id="b8" x="-20%" y="-20%" width="140%" height="140%"><feGaussianBlur stdDeviation="0.7"/></filter><filter id="B8" x="-30%" y="-30%" width="160%" height="160%"><feGaussianBlur stdDeviation="3"/></filter><filter id="M8" x="-30%" y="-30%" width="160%" height="160%"><feGaussianBlur stdDeviation="1.5"/></filter></defs>
<defs><linearGradient id="p8a" gradientUnits="userSpaceOnUse" x1="0" y1="0" x2="0" y2="110"><stop offset="0" stop-color="#5c8aa4"/><stop offset=".09" stop-color="#6692aa"/><stop offset=".15" stop-color="#56687a"/><stop offset=".22" stop-color="#3e323a"/><stop offset=".5" stop-color="#3a2a30"/><stop offset=".555" stop-color="#7a4228"/><stop offset=".6" stop-color="#e08428"/><stop offset=".65" stop-color="#f49a28"/><stop offset=".74" stop-color="#f8a830"/><stop offset=".8" stop-color="#eeb050"/><stop offset=".84" stop-color="#dcc090"/><stop offset=".92" stop-color="#e8c080"/><stop offset="1" stop-color="#f0b060"/></linearGradient></defs>
<g filter="url(#b8)">
<rect x="-5" y="-5" width="228" height="120" fill="url(#p8a)"/>
<g filter="url(#B8)">
<polygon points="110,-5 223,-5 223,24 190,16 150,10" fill="#5a8098" opacity=".9"/>
<polygon points="150,12 190,18 223,26 223,36 195,30 160,22" fill="#4a3c44" opacity=".95"/>
<polygon points="120,26 170,30 223,38 223,46 170,44 130,36" fill="#7a9cb4" opacity=".9"/>
<polygon points="165,46 223,42 223,62 190,58" fill="#b46838" opacity=".9"/>
<polygon points="-5,30 40,34 100,40 150,46 175,56 165,64 120,68 60,66 20,62 -5,60" fill="#382a30" opacity=".95"/>
<polygon points="100,50 130,48 140,54 115,58" fill="#687484" opacity=".25"/>
<polygon points="160,68 223,62 223,84 190,76" fill="#f0a040" opacity=".7"/>
<polygon points="-5,84 30,82 70,84 30,90 -5,92" fill="#c87828" opacity=".7"/>
</g>
<path d="M-5,150 L-5,105 L-5.0,105.0 L-4.2,104.2 L-3.4,104.9 L-2.8,104.9 L-2.0,103.7 L-1.2,104.7 L0.4,104.6 L1.2,104.0 L2.0,104.5 L2.2,104.5 L3.0,102.1 L3.8,104.4 L4.0,104.4 L4.8,103.4 L5.6,104.3 L7.2,104.2 L8.0,103.0 L8.8,104.1 L9.4,104.0 L10.2,103.2 L11.0,103.8 L12.6,103.6 L13.4,101.2 L14.2,103.4 L15.8,103.1 L16.6,101.3 L17.4,102.9 L18.0,102.8 L18.8,102.0 L19.6,102.6 L20.2,102.5 L21.0,101.5 L21.8,102.2 L23.4,102.0 L24.2,101.4 L25.0,101.8 L25.2,101.7 L26.0,101.1 L26.8,101.5 L27.0,101.5 L27.8,100.7 L28.6,101.2 L28.8,101.2 L29.6,100.0 L30.4,100.9 L30.6,100.9 L31.4,99.9 L32.2,100.6 L33.2,100.4 L34.0,98.6 L34.8,100.0 L36.4,99.7 L37.2,99.1 L38.0,99.4 L39.6,99.1 L40.4,97.3 L41.2,98.8 L42.8,98.4 L43.6,97.6 L44.4,98.1 L45.4,97.9 L46.2,97.5 L47.0,97.6 L47.2,97.6 L48.0,96.8 L48.8,97.2 L50.4,96.9 L51.2,96.1 L52.0,96.6 L53.0,96.4 L53.8,95.8 L54.6,96.1 L56.2,95.8 L57.0,94.8 L57.8,95.4 L58.8,95.2 L59.6,93.4 L60.4,94.9 L62.0,94.6 L62.8,92.2 L63.6,94.3 L64.6,94.1 L65.4,91.7 L66.2,93.8 L67.8,93.4 L68.6,91.0 L69.4,93.1 L70.0,93.0 L70.8,91.8 L71.6,92.7 L71.8,92.6 L72.6,91.6 L73.4,92.3 L74.4,92.1 L75.2,89.7 L76.0,91.8 L76.6,91.7 L77.4,91.1 L78.2,91.4 L79.2,91.2 L80.0,88.8 L80.8,90.8 L81.0,90.8 L81.8,90.2 L82.6,90.5 L83.2,90.4 L84.0,89.8 L84.8,90.0 L85.8,89.9 L86.6,88.7 L87.4,89.8 L87.6,89.7 L88.4,89.3 L89.2,89.6 L90.8,89.4 L91.6,88.4 L92.4,89.3 L94.0,89.1 L94.8,88.7 L95.6,88.9 L96.6,88.8 L97.4,87.8 L98.2,88.7 L98.4,88.7 L99.2,86.9 L100.0,88.5 L100.6,88.5 L101.4,88.1 L102.2,88.6 L103.2,88.6 L104.0,86.8 L104.8,88.7 L106.4,88.8 L107.2,87.8 L108.0,88.8 L108.2,88.8 L109.0,88.4 L109.8,88.9 L110.0,88.9 L110.8,87.1 L111.6,89.0 L112.6,89.1 L113.4,86.7 L114.2,89.5 L115.2,89.7 L116.0,87.3 L116.8,90.1 L117.4,90.2 L118.2,89.8 L119.0,90.6 L120.0,90.8 L120.8,90.4 L121.6,91.2 L121.8,91.3 L122.6,90.9 L123.4,91.6 L123.6,91.7 L124.4,90.9 L125.2,92.1 L126.8,92.5 L127.6,91.3 L128.4,92.9 L129.4,93.2 L130.2,92.4 L131.0,93.6 L131.2,93.7 L132.0,92.7 L132.8,94.1 L133.8,94.3 L134.6,93.1 L135.4,94.8 L136.4,95.0 L137.2,94.2 L138.0,95.5 L139.6,95.9 L140.4,94.1 L141.2,96.3 L142.8,96.7 L143.6,95.7 L144.4,97.2 L146.0,97.6 L146.8,97.0 L147.6,98.0 L147.8,98.1 L148.6,95.7 L149.4,98.5 L150.4,98.8 L151.2,97.0 L152.0,99.2 L152.6,99.4 L153.4,98.2 L154.2,99.8 L155.8,100.2 L156.6,99.0 L157.4,100.6 L158.4,100.8 L159.2,98.4 L160.0,101.2 L161.0,101.4 L161.8,101.0 L162.6,101.8 L164.2,102.2 L165.0,99.8 L165.8,102.5 L166.8,102.8 L167.6,102.4 L168.4,103.2 L170.0,103.5 L170.8,101.1 L171.6,103.9 L172.2,104.0 L173.0,103.6 L173.8,104.2 L174.8,104.3 L175.6,102.5 L176.4,104.5 L177.4,104.6 L178.2,104.0 L179.0,104.8 L180.0,104.9 L180.8,102.5 L181.6,105.0 L182.6,105.2 L183.4,104.6 L184.2,105.3 L185.8,105.5 L186.6,105.1 L187.4,105.7 L187.6,105.7 L188.4,105.1 L189.2,105.9 L189.4,105.9 L190.2,104.7 L191.0,106.1 L192.0,106.2 L192.8,105.6 L193.6,106.3 L195.2,106.5 L196.0,105.3 L196.8,106.6 L197.8,106.6 L198.6,105.8 L199.4,106.7 L200.4,106.8 L201.2,106.0 L202.0,106.9 L203.0,106.9 L203.8,105.9 L204.6,107.0 L205.6,107.1 L206.4,106.1 L207.2,107.2 L208.2,107.2 L209.0,106.0 L209.8,107.3 L211.4,107.4 L212.2,107.0 L213.0,107.5 L213.2,107.5 L214.0,105.1 L214.8,107.6 L215.4,107.6 L216.2,106.4 L217.0,107.7 L217.6,107.7 L218.4,107.1 L219.2,107.8 L220.2,107.8 L221.0,107.0 L221.8,107.9 L222.8,108.0 L223.6,107.2 L224.4,108.0 L223,108 L223,150 Z" fill="#211819"/>
</g></svg>
</div>
<div class="card" style="left:712px;top:657px;height:263px">
<svg class="ph" style="left:3px;top:6px;width:218px;height:145px" viewBox="0 0 218 145" preserveAspectRatio="none"><defs><filter id="b9" x="-20%" y="-20%" width="140%" height="140%"><feGaussianBlur stdDeviation="0.7"/></filter><filter id="B9" x="-30%" y="-30%" width="160%" height="160%"><feGaussianBlur stdDeviation="3"/></filter><filter id="M9" x="-30%" y="-30%" width="160%" height="160%"><feGaussianBlur stdDeviation="1.5"/></filter></defs>
<defs><linearGradient id="p9a" gradientUnits="userSpaceOnUse" x1="0" y1="0" x2="10" y2="90"><stop offset="0" stop-color="#093c7e"/><stop offset=".35" stop-color="#1458a2"/><stop offset=".62" stop-color="#3a80c4"/><stop offset=".84" stop-color="#8cbce2"/><stop offset="1" stop-color="#d6e8f4"/></linearGradient>
<linearGradient id="p9b" gradientUnits="userSpaceOnUse" x1="0" y1="96" x2="0" y2="145"><stop offset="0" stop-color="#44708e"/><stop offset="1" stop-color="#223e58"/></linearGradient>
<linearGradient id="p9c" gradientUnits="userSpaceOnUse" x1="0" y1="82" x2="0" y2="124"><stop offset="0" stop-color="#c4dcec" stop-opacity="0"/><stop offset=".28" stop-color="#b8d2e4" stop-opacity=".85"/><stop offset=".55" stop-color="#9cbcd0" stop-opacity=".7"/><stop offset="1" stop-color="#5c8094" stop-opacity="0"/></linearGradient>
<linearGradient id="p9d" gradientUnits="userSpaceOnUse" x1="0" y1="0" x2="218" y2="0"><stop offset="0" stop-color="#fff" stop-opacity="0"/><stop offset="1" stop-color="#7ab4ec" stop-opacity=".28"/></linearGradient></defs>
<g filter="url(#b9)">
<rect x="-5" y="-5" width="228" height="100" fill="url(#p9a)"/>
<rect x="-5" y="-5" width="228" height="100" fill="url(#p9d)"/>
<polygon points="223,22 223,40 130,88 100,88" fill="#fff" opacity=".1" filter="url(#M9)"/>
<g fill="#eef2fa"><ellipse cx="52" cy="33" rx="7.500" ry="3" transform="rotate(12 52 33)"/><ellipse cx="77" cy="9" rx="3.500" ry="6" transform="rotate(-30 77 9)" opacity=".8"/><ellipse cx="183" cy="38" rx="11" ry="2.500" transform="rotate(-14 183 38)"/><ellipse cx="121" cy="64" rx="7" ry="2"/><ellipse cx="42" cy="64" rx="8" ry="1.300"/><ellipse cx="105" cy="38" rx="3" ry="2" opacity=".8"/><ellipse cx="73" cy="45" rx="3.500" ry="1.500" opacity=".8"/><ellipse cx="47" cy="54" rx="4" ry="1.200" opacity=".7"/><ellipse cx="142" cy="62" rx="3" ry="1"/></g>
<polygon points="45,86 60,84 75,85 98,82 110,86 128,88 140,86 150,81 158,84 167,81 178,86 195,86 210,83 223,81 223,126 45,126" fill="#7ea2c6"/>
<polygon points="128,100 140,88 150,81 158,84 167,81 180,92 188,100" fill="#5c86ae" opacity=".85"/>
<rect x="40" y="82" width="183" height="42" fill="url(#p9c)"/>
<polygon points="-5,82 6,78 16,77 24,74 30,71 36,75 44,82 52,90 60,98 66,106 70,114 40,120 -5,124" fill="#6a7484"/>
<polygon points="-5,82 6,78 16,77 24,74 30,71 26,80 18,88 8,96 -5,100" fill="#8e98a4"/>
<polygon points="30,71 36,75 44,82 52,90 60,98 50,102 40,92 34,82" fill="#525c6c"/>
<polygon points="-5,112 30,108 70,108 95,110 135,112 165,112 150,124 130,140 124,150 -5,150" fill="#1e363c" filter="url(#M9)"/>
<polygon points="-5,120 40,116 90,118 140,122 128,142 122,150 -5,150" fill="#1a3036"/>
<polygon points="-5,104 20,100 40,108 30,118 -5,124" fill="#2c3e48"/>
<polygon points="46,134 60,124 74,117 86,114 96,119 104,126 110,134 100,140 60,142" fill="#1c2c34"/>
<polygon points="98,126 104,126 110,134 106,140 99,138" fill="#a89c8c"/>
<polygon points="223,99 196,100 176,106 158,116 142,128 126,142 120,150 223,150" fill="url(#p9b)"/>
<polygon points="122,130 140,122 146,124 136,132 126,138" fill="#86a04c" opacity=".8"/>
<path d="M141,120 Q134,128 122,132 Q118,140 120,150" stroke="#b4d0d8" stroke-width="1.600" fill="none"/>
<polygon points="66,112 82,106 88,108 72,116" fill="#9aa870" opacity=".6"/>
</g></svg>
</div>
<div class="card" style="left:946px;top:657px;height:263px">
<svg class="ph" style="left:3px;top:5px;width:218px;height:146px" viewBox="0 0 218 146" preserveAspectRatio="none"><defs><filter id="b10" x="-20%" y="-20%" width="140%" height="140%"><feGaussianBlur stdDeviation="0.7"/></filter><filter id="B10" x="-30%" y="-30%" width="160%" height="160%"><feGaussianBlur stdDeviation="3"/></filter><filter id="M10" x="-30%" y="-30%" width="160%" height="160%"><feGaussianBlur stdDeviation="1.5"/></filter></defs>
<defs><linearGradient id="p10a" gradientUnits="userSpaceOnUse" x1="0" y1="0" x2="0" y2="62"><stop offset="0" stop-color="#cfa48c"/><stop offset=".4" stop-color="#e2a47a"/><stop offset=".72" stop-color="#f28e4c"/><stop offset=".95" stop-color="#ee7836"/><stop offset="1" stop-color="#b06440"/></linearGradient>
<linearGradient id="p10b" gradientUnits="userSpaceOnUse" x1="0" y1="0" x2="218" y2="0"><stop offset=".3" stop-color="#8c7870" stop-opacity="0"/><stop offset="1" stop-color="#8c7870" stop-opacity=".85"/></linearGradient>
<linearGradient id="p10c" gradientUnits="userSpaceOnUse" x1="0" y1="60" x2="0" y2="125"><stop offset="0" stop-color="#86604a"/><stop offset=".3" stop-color="#6a5040"/><stop offset="1" stop-color="#3c2e2a"/></linearGradient>
<linearGradient id="p10d" gradientUnits="userSpaceOnUse" x1="0" y1="32" x2="0" y2="125"><stop offset="0" stop-color="#262020"/><stop offset=".5" stop-color="#322828"/><stop offset="1" stop-color="#241c1c"/></linearGradient>
<linearGradient id="p10e" gradientUnits="userSpaceOnUse" x1="40" y1="110" x2="150" y2="40"><stop offset="0" stop-color="#6a5446" stop-opacity=".75"/><stop offset=".6" stop-color="#5a463c" stop-opacity=".3"/><stop offset="1" stop-color="#3a2e2c" stop-opacity="0"/></linearGradient></defs>
<g filter="url(#b10)">
<rect x="-5" y="-5" width="228" height="70" fill="url(#p10a)"/>
<rect x="-5" y="-5" width="228" height="66" fill="url(#p10b)"/>
<polygon points="30,50 60,46 95,44 60,52 35,54" fill="#c87848" opacity=".5" filter="url(#M10)"/>
<rect x="-5" y="60" width="228" height="92" fill="url(#p10c)"/>
<polygon points="72,64 78,59 84,58 90,62 96,60 100,52 104,46 108,48 112,56 118,60 110,70 90,84 60,98" fill="#604c42"/>
<polygon points="223,50 214,47 206,52 198,48 190,50 180,46 170,40 158,35 148,32 140,38 130,47 118,58 104,68 88,78 70,88 50,98 30,106 30,130 223,130" fill="url(#p10d)"/>
<polygon points="148,32 140,38 130,47 118,58 104,68 88,78 70,88 50,98 30,106 30,118 110,100 150,60" fill="url(#p10e)"/>
<polygon points="28,110 40,106 56,104 76,100 96,98 112,94 126,92 140,96 156,100 180,96 200,90 223,86 223,135 28,135" fill="#2a2322" opacity=".9"/>
<polygon points="-5,102 10,106 28,107 46,114 64,124 80,132 90,128 104,120 116,115 130,116 144,124 160,130 223,134 223,152 -5,152" fill="#070505"/>
</g></svg>
</div>
</div>
</div>
</div>
</body></html>
